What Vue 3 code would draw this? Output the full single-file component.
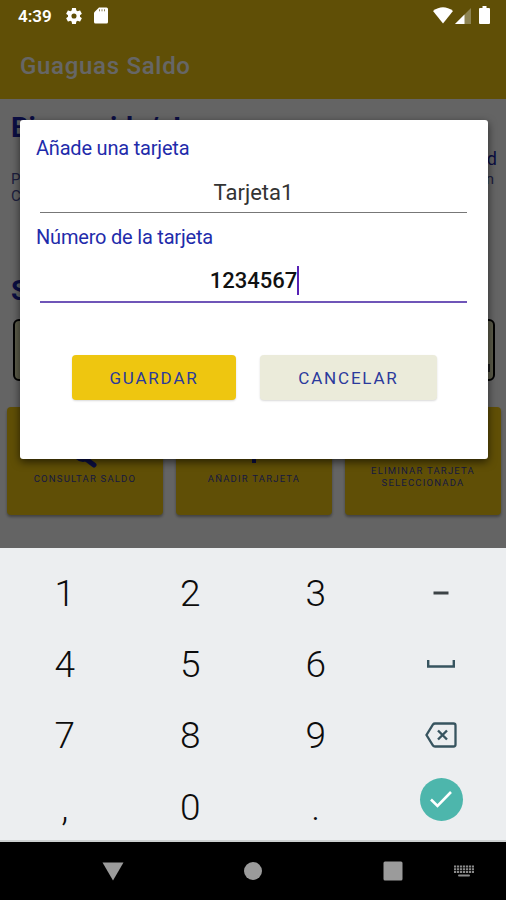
<script setup>
    import {ref} from 'vue'

    const cardName = ref('Tarjeta1')
    const cardNumber = ref('1234567')

    // --- numeric keyboard, row by row ---
    const keys = ['1','2','3','minus','4','5','6','space','7','8','9','delete',',','0','.','done']
    const icons = ['minus','space','delete','done']

    const pressKey = (key) => {
        if (key === 'delete') {
            cardNumber.value = cardNumber.value.slice(0, -1)
        } else if (!icons.includes(key)) {
            cardNumber.value += key
        }
    }
</script>

<template>
    <div class="phone">
        <div class="screen">
            <header class="appbar">
                <h1>Guaguas Saldo</h1>
            </header>
            <main class="content">
                <h2>Bienvenido/a!</h2>
                <p class="intro big"><span></span><span>d</span></p>
                <p class="intro"><span>P</span><span class="end">n</span></p>
                <p class="intro last"><span>C</span></p>
                <h2 class="select-title">S</h2>
                <div class="select"><span class="arrow"></span></div>
                <div class="actions">
                    <div class="action">
                        <svg class="action-icon" viewBox="0 0 30 30"><circle cx="13" cy="11" r="8" fill="none" stroke="#1c25a8" stroke-width="4" /><path d="M16 18l8 6" stroke="#1c25a8" stroke-width="5" stroke-linecap="round" /></svg>
                        <span>CONSULTAR SALDO</span>
                    </div>
                    <div class="action">
                        <svg class="action-icon" viewBox="0 0 30 30"><path d="M15 2v20M4 12h22" stroke="#1c25a8" stroke-width="4" /></svg>
                        <span>AÑADIR TARJETA</span>
                    </div>
                    <div class="action two-lines">
                        <span>ELIMINAR TARJETA<br>SELECCIONADA</span>
                    </div>
                </div>
            </main>
        </div>

        <div class="scrim"></div>

        <div class="status">
            <span class="clock">4:39</span>
            <svg class="gear" width="16" height="16" viewBox="2 2 20 20"><path fill="#fff" d="M19.43 12.98c.04-.32.07-.64.07-.98s-.03-.66-.07-.98l2.11-1.65c.19-.15.24-.42.12-.64l-2-3.46c-.12-.22-.39-.3-.61-.22l-2.49 1c-.52-.4-1.08-.73-1.69-.98l-.38-2.65A.49.49 0 0 0 14 2h-4c-.25 0-.46.18-.49.42l-.38 2.65c-.61.25-1.17.59-1.69.98l-2.49-1c-.23-.09-.49 0-.61.22l-2 3.46c-.13.22-.07.49.12.64l2.11 1.65c-.04.32-.07.65-.07.98s.03.66.07.98l-2.11 1.65c-.19.15-.24.42-.12.64l2 3.46c.12.22.39.3.61.22l2.49-1c.52.4 1.08.73 1.69.98l.38 2.65c.03.24.24.42.49.42h4c.25 0 .46-.18.49-.42l.38-2.65c.61-.25 1.17-.59 1.69-.98l2.49 1c.23.09.49 0 .61-.22l2-3.46c.12-.22.07-.49-.12-.64zM12 15.200a3.200 3.200 0 1 1 0-6.400 3.200 3.200 0 0 1 0 6.400z" /></svg>
            <svg class="sd" width="14" height="17" viewBox="0 0 14 17"><path fill="#fff" d="M5 .5h7.500q1.500 0 1.500 1.500v13q0 1.500-1.500 1.500h-11q-1.500 0-1.500-1.500v-9.500z" /><path d="M5.500 2.300v2M8 2.300v2M10.500 2.300v2" stroke="#8d8158" stroke-width="1" /></svg>
            <svg class="wifi" width="20" height="17" viewBox="0 0 20 17"><path fill="#fff" d="M0 4Q10-3.500 20 4L10 16.500z" /></svg>
            <svg class="signal" width="16" height="16" viewBox="0 0 16 16"><path fill="#8d8352" d="M16 0v16H0z" /><path fill="#fff" d="M9.500 6.500V16H0z" /></svg>
            <svg class="battery" width="11" height="18" viewBox="0 0 11 18"><path fill="#fff" d="M3.500 0h4v2H10q1 0 1 1v14q0 1-1 1H1q-1 0-1-1V3q0-1 1-1h2.500z" /></svg>
        </div>

        <div class="dialog">
            <label>Añade una tarjeta</label>
            <div class="field name"><span>{{ cardName }}</span></div>
            <label class="second">Número de la tarjeta</label>
            <div class="field active"><span class="number">{{ cardNumber }}<i class="caret"></i></span></div>
            <div class="buttons">
                <button class="save">GUARDAR</button>
                <button class="cancel">CANCELAR</button>
            </div>
        </div>

        <div class="keyboard">
            <div v-for="key in keys" :key="key" class="key" :class="{ 'key-done': key === 'done', 'key-icon': icons.includes(key) }" @click="pressKey(key)">
                <svg v-if="key === 'minus'" width="16" height="4" viewBox="0 0 16 4"><path d="M.5 2h15" stroke="#3c4346" stroke-width="3" /></svg>
                <svg v-else-if="key === 'space'" width="28" height="8" viewBox="0 0 28 8"><path d="M1.200 0v6.500h25.600V0" fill="none" stroke="#37545f" stroke-width="2.400" /></svg>
                <svg v-else-if="key === 'delete'" width="32" height="26" viewBox="0 0 32 26"><path d="M10 1.500h18.500q2 0 2 2v19q0 2-2 2H10q-1.300 0-2-1L1.500 13l6.500-10.500q.7-1 2-1z" fill="none" stroke="#37545f" stroke-width="2.300" /><path d="M13 8.500l9 9M22 8.500l-9 9" stroke="#37545f" stroke-width="2.400" /></svg>
                <span v-else-if="key === 'done'" class="done">
                    <svg width="24" height="20" viewBox="0 0 24 20"><path d="M2 10.500l6.500 6.500L22 3" fill="none" stroke="#fff" stroke-width="2.600" /></svg>
                </span>
                <template v-else>{{ key }}</template>
            </div>
        </div>

        <nav class="navbar">
            <svg width="22" height="19" viewBox="0 0 22 19"><path fill="#9b9b9b" d="M.5.500h21L11 18.500z" /></svg>
            <svg width="18" height="18" viewBox="0 0 18 18"><circle cx="9" cy="9" r="9" fill="#9b9b9b" /></svg>
            <svg width="20" height="20" viewBox="0 0 20 20"><rect x=".5" y=".5" width="19" height="19" rx="1.500" fill="#9b9b9b" /></svg>
            <svg class="ime" width="20" height="12" viewBox="0 0 20 12"><path d="M0 1.500h20M0 4.200h20M0 6.900h20" stroke="#8a8a8a" stroke-width="2" stroke-dasharray="2.200 .8" /><path d="M5 10.500h10" stroke="#8a8a8a" stroke-width="2" stroke-linecap="round" /></svg>
        </nav>
    </div>
</template>

<style>
    html, body {
        margin: 0;
    }
</style>

<style scoped>
    .phone {
        position: relative;
        display: flex;
        flex-direction: column;
        width: 506px;
        height: 900px;
        overflow: hidden;
        font-family: Roboto, sans-serif;
        background: #000;
    }
    svg {
        display: block;
        flex: none;
    }
    h1, h2, p {
        margin: 0;
    }

    /* --- page behind the dialog --- */
    .screen {
        height: 548px;
        background: #fafafa;
        overflow: hidden;
    }
    .appbar {
        height: 99px;
        box-sizing: border-box;
        padding: 51px 20px 0;
        background: #efc60f;
    }
    h1 {
        font-size: 24px;
        line-height: 30px;
        font-weight: 500;
        letter-spacing: 0.7px;
        color: #fff;
    }
    .content {
        padding: 10px 5px 0 7px;
    }
    h2 {
        padding-left: 4px;
        font-size: 27.5px;
        line-height: 38px;
        font-weight: 700;
        color: #1c25a8;
    }
    .intro {
        display: flex;
        justify-content: space-between;
        padding: 0 4px;
        font-size: 15px;
        line-height: 17px;
        color: #4a4f9c;
    }
    .intro.big {
        font-size: 18px;
        line-height: 24px;
        color: #1c25a8;
    }
    .end {
        padding-right: 3px;
    }
    .select-title {
        margin-top: 67px;
    }
    .select {
        display: flex;
        align-items: flex-end;
        justify-content: flex-end;
        height: 62px;
        margin: 9px 6px 26px;
        box-sizing: border-box;
        border: 2px solid #000;
        border-radius: 6px;
        background: #e6e6b8;
    }
    .arrow {
        width: 7px;
        height: 8px;
        margin: 0 3px 7px;
        background: #444;
    }
    .actions {
        display: grid;
        grid-template-columns: repeat(3, 156px);
        justify-content: space-between;
    }
    .action {
        display: flex;
        flex-direction: column;
        align-items: center;
        height: 108px;
        box-sizing: border-box;
        padding-top: 34px;
        border-radius: 4px;
        background: #efc60f;
        box-shadow: 0 2px 3px rgba(0, 0, 0, .35);
        font-size: 9.5px;
        line-height: 12px;
        letter-spacing: 1.2px;
        text-align: center;
        color: #3a40a0;
    }
    .action-icon {
        width: 30px;
        height: 30px;
        margin-bottom: 2px;
    }
    .action.two-lines {
        padding-top: 58px;
        line-height: 11.5px;
    }
    .scrim {
        position: absolute;
        top: 0;
        left: 0;
        right: 0;
        height: 548px;
        background: rgba(0, 0, 0, .6);
    }

    /* --- status bar --- */
    .status {
        position: absolute;
        top: 0;
        left: 0;
        right: 0;
        display: flex;
        align-items: center;
        height: 31px;
        padding: 0 16px 0 18px;
        color: #fff;
    }
    .clock {
        width: 48px;
        font-size: 17px;
        font-weight: 600;
    }
    .sd {
        margin-left: 12px;
    }
    .wifi {
        margin-left: auto;
    }
    .signal {
        margin: 1px 8px 0 2px;
    }
    .battery {
        margin-top: -1px;
    }

    /* --- dialog --- */
    .dialog {
        position: absolute;
        top: 120px;
        left: 20px;
        width: 468px;
        height: 339px;
        box-sizing: border-box;
        padding: 16px 16px 0;
        border-radius: 3px;
        background: #fff;
        box-shadow: 0 3px 8px rgba(0, 0, 0, .6);
    }
    label {
        display: block;
        height: 24px;
        font-size: 20px;
        line-height: 24px;
        letter-spacing: -0.2px;
        color: #1f2cab;
    }
    .field {
        display: flex;
        justify-content: center;
        align-items: flex-end;
        height: 53px;
        box-sizing: border-box;
        margin: 0 5px 0 4px;
        padding-bottom: 6px;
        border-bottom: 1px solid #777;
        font-size: 22px;
        line-height: 26px;
        color: #333;
    }
    .second {
        margin-top: 12px;
    }
    .field.active {
        height: 54px;
        padding-bottom: 7px;
        border-bottom: 2px solid #6f55b8;
    }
    .number {
        position: relative;
        font-weight: 500;
        font-size: 22px;
        color: #111;
    }
    .caret {
        position: absolute;
        right: -2px;
        top: -2px;
        width: 2px;
        height: 29px;
        background: #5722b5;
    }
    .buttons {
        display: flex;
        gap: 24px;
        margin: 52px 0 0 36px;
    }
    button {
        height: 45px;
        padding: 0;
        border: 0;
        border-radius: 4px;
        font-family: inherit;
        font-size: 17px;
        letter-spacing: 1.8px;
        color: #2b3a9c;
    }
    .save {
        width: 164px;
        background: #eec610;
        box-shadow: 0 1px 2px rgba(0, 0, 0, .15);
    }
    .cancel {
        width: 177px;
        background: #ebebda;
        box-shadow: 0 1px 2px rgba(0, 0, 0, .15);
    }

    /* --- keyboard --- */
    .keyboard {
        display: grid;
        grid-template-columns: repeat(4, 125.5px);
        grid-template-rows: repeat(4, 71.2px);
        height: 294px;
        box-sizing: border-box;
        padding: 9px 2px 0;
        border-bottom: 2px solid #cdd0d0;
        background: #eceef0;
    }
    .key {
        display: flex;
        align-items: center;
        justify-content: center;
        padding-top: 2px;
        font-size: 37px;
        font-weight: 350;
        color: #0c0c0c;
    }
    .key-icon {
        padding-top: 0;
    }
    .key-done {
        align-items: flex-start;
    }
    .done {
        display: flex;
        align-items: center;
        justify-content: center;
        width: 43px;
        height: 43px;
        margin-top: 7px;
        border-radius: 50%;
        background: #4db6ac;
    }

    /* --- system navigation --- */
    .navbar {
        display: grid;
        grid-template-columns: repeat(3, 140px) 1fr;
        align-items: center;
        justify-items: center;
        height: 58px;
        padding-left: 43px;
        background: #000;
    }
    .ime {
        justify-self: start;
        margin: 0 0 0 -9px;
    }
</style>
